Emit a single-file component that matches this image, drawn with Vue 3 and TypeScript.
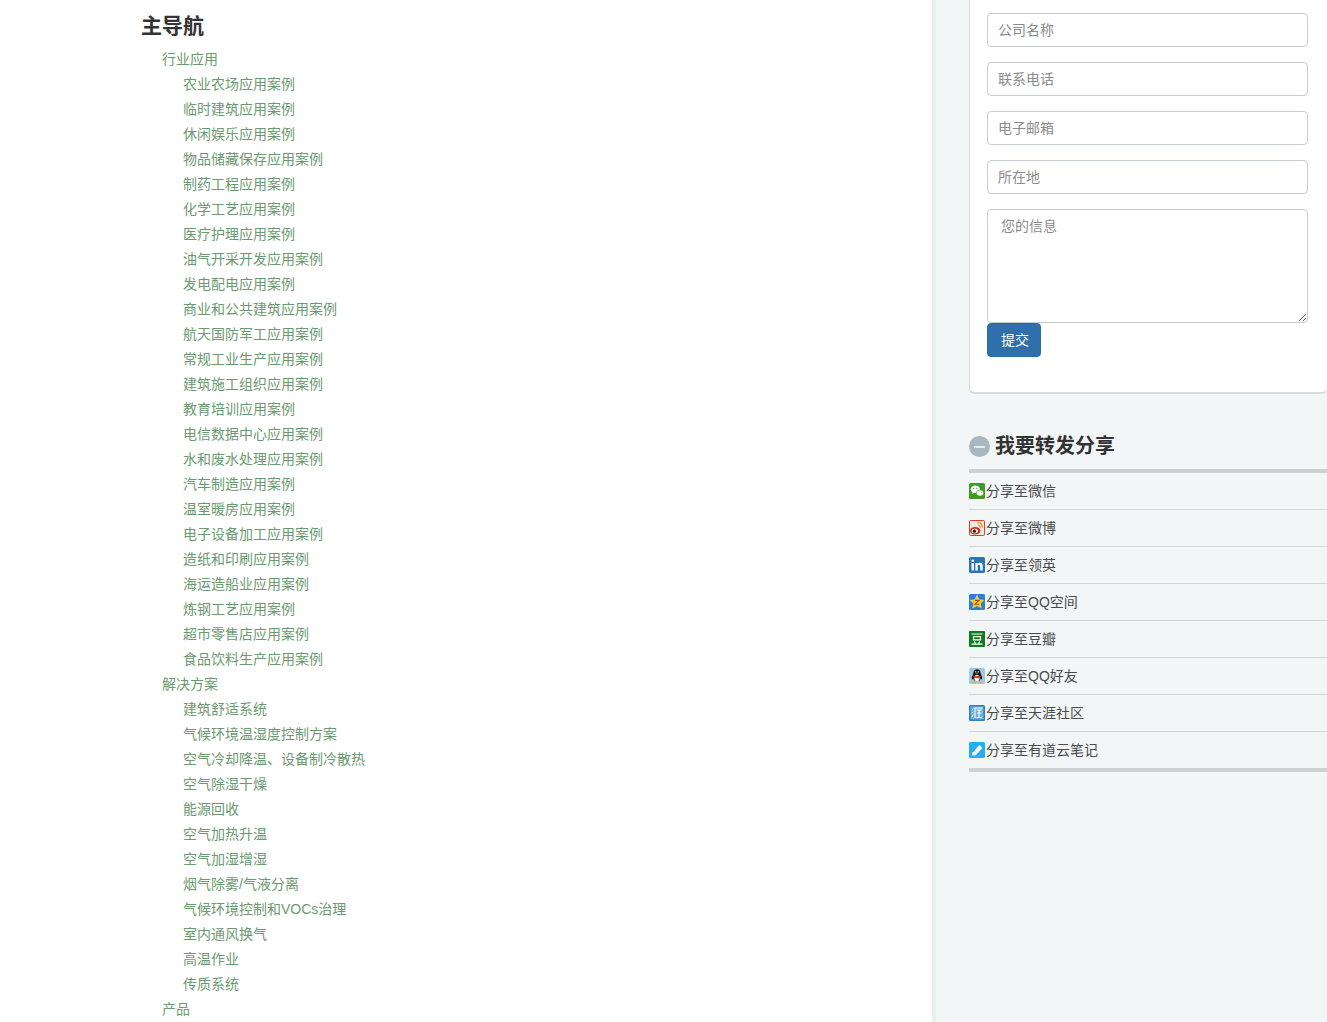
<script setup lang="ts">
const industry: string[] = ['农业农场应用案例','临时建筑应用案例','休闲娱乐应用案例','物品储藏保存应用案例','制药工程应用案例','化学工艺应用案例','医疗护理应用案例','油气开采开发应用案例','发电配电应用案例','商业和公共建筑应用案例','航天国防军工应用案例','常规工业生产应用案例','建筑施工组织应用案例','教育培训应用案例','电信数据中心应用案例','水和废水处理应用案例','汽车制造应用案例','温室暖房应用案例','电子设备加工应用案例','造纸和印刷应用案例','海运造船业应用案例','炼钢工艺应用案例','超市零售店应用案例','食品饮料生产应用案例']
const solutions: string[] = ['建筑舒适系统','气候环境温湿度控制方案','空气冷却降温、设备制冷散热','空气除湿干燥','能源回收','空气加热升温','空气加湿增湿','烟气除雾/气液分离','气候环境控制和VOCs治理','室内通风换气','高温作业','传质系统']
const groups = [
  { title: '行业应用', items: industry },
  { title: '解决方案', items: solutions },
  { title: '产品', items: [] as string[] },
]
const fields: string[] = ['公司名称','联系电话','电子邮箱','所在地']
const shares = [
  { key: 'wechat', label: '分享至微信' },
  { key: 'weibo', label: '分享至微博' },
  { key: 'linkedin', label: '分享至领英' },
  { key: 'qzone', label: '分享至QQ空间' },
  { key: 'douban', label: '分享至豆瓣' },
  { key: 'qq', label: '分享至QQ好友' },
  { key: 'tianya', label: '分享至天涯社区' },
  { key: 'youdao', label: '分享至有道云笔记' },
]
</script>

<template>
  <div class="page">
    <main class="main">
      <h2 class="nav-title">主导航</h2>
      <ul class="nav">
        <li v-for="g in groups" :key="g.title">
          <a class="link">{{ g.title }}</a>
          <ul v-if="g.items.length" class="sub">
            <li v-for="item in g.items" :key="item"><a class="link">{{ item }}</a></li>
          </ul>
        </li>
      </ul>
    </main>
    <aside class="side">
      <form class="card" @submit.prevent>
        <input v-for="f in fields" :key="f" class="field" type="text" :placeholder="f" />
        <textarea class="area" placeholder="您的信息"></textarea>
        <button class="submit" type="submit">提交</button>
      </form>
      <h3 class="share-title">
        <span class="minus"><span class="minus-bar"></span></span>
        我要转发分享
      </h3>
      <ul class="shares">
        <li v-for="s in shares" :key="s.key" class="share">
          <svg class="icon" viewBox="0 0 16 16" aria-hidden="true">
            <template v-if="s.key === 'wechat'">
              <rect width="16" height="16" rx="1.5" fill="#3f9c1f" />
              <ellipse cx="6.3" cy="6.3" rx="4.6" ry="3.8" fill="#fff" />
              <path d="M3.6 8.6 3.2 11l2.4-1.4z" fill="#fff" />
              <ellipse cx="11" cy="10" rx="3.6" ry="3" fill="#fff" stroke="#3f9c1f" stroke-width=".6" />
              <circle cx="4.8" cy="5.4" r=".6" fill="#3f9c1f" />
              <circle cx="7.8" cy="5.4" r=".6" fill="#3f9c1f" />
              <circle cx="9.8" cy="9.4" r=".45" fill="#3f9c1f" />
              <circle cx="12.2" cy="9.4" r=".45" fill="#3f9c1f" />
            </template>
            <template v-else-if="s.key === 'weibo'">
              <rect x=".5" y=".5" width="15" height="15" rx="1" fill="#f7e6dc" stroke="#dd3a2c" />
              <ellipse cx="6.2" cy="10.8" rx="5.2" ry="3.8" fill="#d8281f" />
              <ellipse cx="5.8" cy="11" rx="3.2" ry="2.3" fill="#f5f5f5" />
              <circle cx="5.4" cy="11.2" r="1.6" fill="#222" />
              <path d="M8.5 2.8c3-.5 5 1.600 4.600 4.800M8.900 5.200c1.500-.2 2.500.8 2.200 2.300" fill="none" stroke="#ee9a2d" stroke-width="1.4" />
            </template>
            <template v-else-if="s.key === 'linkedin'">
              <rect width="16" height="16" rx="1.5" fill="#2a74b8" />
              <rect x="2.5" y="6" width="2.4" height="7.5" fill="#fff" />
              <circle cx="3.7" cy="3.8" r="1.4" fill="#fff" />
              <path d="M6.4 6h2.300v1.100c.5-.8 1.300-1.300 2.400-1.300 2 0 2.600 1.300 2.600 3.200v4.500h-2.400V9.600c0-1-.3-1.600-1.200-1.600s-1.400.7-1.400 1.700v3.800H6.400z" fill="#fff" />
            </template>
            <template v-else-if="s.key === 'qzone'">
              <rect width="16" height="16" rx="1.5" fill="#2b7fd6" />
              <path d="M8 .6l2.300 4.700 5.100.6-3.700 3.500 1 5.100L8 12.100l-4.700 2.400 1-5.100L.6 5.900l5.100-.6z" fill="#f6c83a" />
              <path d="M5.800 6.400h4.400L5.800 10.200h4.400" fill="none" stroke="#a8501f" stroke-width="1.1" />
            </template>
            <template v-else-if="s.key === 'douban'">
              <rect width="16" height="16" rx="1" fill="#0f7a1e" />
              <path d="M2.500 3h11M4.500 5.600h7v3.200h-7zM5.400 10l1 3M10.600 10l-1 3M2.500 13.200h11" fill="none" stroke="#fff" stroke-width="1.2" />
            </template>
            <template v-else-if="s.key === 'qq'">
              <rect width="16" height="16" rx="1.5" fill="#9ccbea" />
              <path d="M8 1.200c2.600 0 3.700 2 3.700 4.200 0 .8.900 1.700 1.300 3.200.4 1.700.2 2.900-.3 2.900-.3 0-.7-.6-1-.9-.2 1-.7 1.600-1.100 2H5.400c-.4-.4-.9-1-1.100-2-.3.3-.7.900-1 .9-.5 0-.7-1.200-.3-2.900.4-1.500 1.300-2.400 1.300-3.200C4.300 3.200 5.400 1.200 8 1.200z" fill="#141414" />
              <ellipse cx="8" cy="10" rx="2.7" ry="3" fill="#fff" />
              <path d="M4.300 7.500c2.400 1 5 1 7.400 0l.3 1.200-1.600.7v1.700l-1.500-1.200c-1 .2-2 .1-3-.2L4 8.600z" fill="#d8321d" />
              <path d="M3.500 14.800c0-1 1.500-1.400 2.800-1.200l.2 1.200zM12.500 14.800c0-1-1.500-1.400-2.800-1.200l-.2 1.200z" fill="#eda21b" />
              <path d="M6.500 5.600h3l-1.500 1z" fill="#eda21b" />
              <circle cx="6.8" cy="3.900" r=".7" fill="#fff" />
              <circle cx="9.2" cy="3.900" r=".7" fill="#fff" />
            </template>
            <template v-else-if="s.key === 'tianya'">
              <rect width="16" height="16" rx="1.5" fill="#2f7fba" />
              <rect x="1.500" y="1.500" width="13" height="13" fill="#6fb0dc" />
              <path d="M3 4l1 1M2.800 7l1 1M3 12l1-2.500M5.500 3h8M6 3v10M7.800 5.200h5M10 5.200v7M8 8h4.500M7.500 12.600h5.500" fill="none" stroke="#fff" stroke-width="1" />
            </template>
            <template v-else>
              <rect width="16" height="16" rx="1.5" fill="#25aef0" />
              <path d="M3 11.500 9.500 4c.6-.6 1.400-.6 2 0l1 1c.6.600.6 1.300 0 1.900L7 13H3.500z" fill="#fff" />
              <path d="M3 13.500h4L3 10z" fill="#cfeefc" />
            </template>
          </svg>
          <span class="label">{{ s.label }}</span>
        </li>
      </ul>
    </aside>
  </div>
</template>

<style scoped>
.page {
  display: flex;
  height: 1022px;
  overflow: hidden;
  font-family: "Liberation Sans", "Noto Sans CJK SC", sans-serif;
  font-size: 14px;
  color: #444;
  background: #fff;
}
.main {
  width: 932px;
  flex: none;
  box-sizing: border-box;
  padding: 14px 0 0 141px;
  overflow: hidden;
}
.nav-title {
  margin: 0 0 9px;
  font-size: 21px;
  line-height: 24px;
  font-weight: 700;
  color: #333;
}
.nav, .sub, .shares {
  list-style: none;
  margin: 0;
  padding: 0;
}
.nav { padding-left: 21px; }
.sub { padding-left: 21px; }
.nav li { line-height: 25px; }
.link { color: #6b9a70; }
.side {
  flex: 1;
  min-width: 0;
  box-sizing: border-box;
  background: #f2f6f7;
  border-left: 4px solid #e9eeee;
  padding-left: 33px;
}
.card {
  box-sizing: border-box;
  height: 394px;
  display: flex;
  flex-direction: column;
  align-items: flex-start;
  padding: 13px 19px 0 17px;
  background: #fff;
  border: 1px solid #d5dbdc;
  border-top: 0;
  border-right: 0;
  border-bottom-width: 2px;
  border-radius: 0 0 5px 5px;
}
.field, .area {
  box-sizing: border-box;
  width: 321px;
  border: 1px solid #c3cdd2;
  border-radius: 4px;
  background: #fff;
  color: #555;
  font: inherit;
  outline: none;
}
.field {
  height: 34px;
  margin-bottom: 15px;
  padding: 0 10px;
}
.area {
  height: 114px;
  padding: 6px 13px;
  display: block;
  resize: vertical;
  line-height: 20px;
}
.field::placeholder, .area::placeholder { color: #8b8b8b; opacity: 1; }
.submit {
  width: 54px;
  height: 34px;
  padding: 0 0 2px 2px;
  border: 1px solid #2e6da4;
  border-radius: 4px;
  background: #2f6fab;
  color: #fff;
  font: inherit;
}
.share-title {
  display: flex;
  align-items: center;
  gap: 5px;
  margin: 0;
  height: 75px;
  box-sizing: border-box;
  padding-top: 40px;
  padding-bottom: 10px;
  font-size: 20px;
  line-height: 25px;
  font-weight: 700;
  color: #333;
}
.minus {
  width: 21px;
  height: 21px;
  border-radius: 50%;
  background: #a8b7c0;
  display: flex;
  align-items: center;
  justify-content: center;
  flex: none;
}
.minus-bar {
  width: 11px;
  height: 2px;
  background: #e6ebee;
}
.shares {
  border-top: 4px solid #ccd1d2;
  border-bottom: 4px solid #ccd1d2;
}
.share {
  box-sizing: border-box;
  height: 37px;
  display: flex;
  align-items: center;
  border-bottom: 1px solid #d0d5d7;
  color: #4a4a4a;
}
.share:last-child {
  height: 36px;
  border-bottom: 0;
}
.icon {
  width: 16px;
  height: 16px;
  flex: none;
  margin-right: 1px;
}
.label { margin-top: -2px; }
</style>

<style>
html, body { margin: 0; overflow: hidden; }
</style>
